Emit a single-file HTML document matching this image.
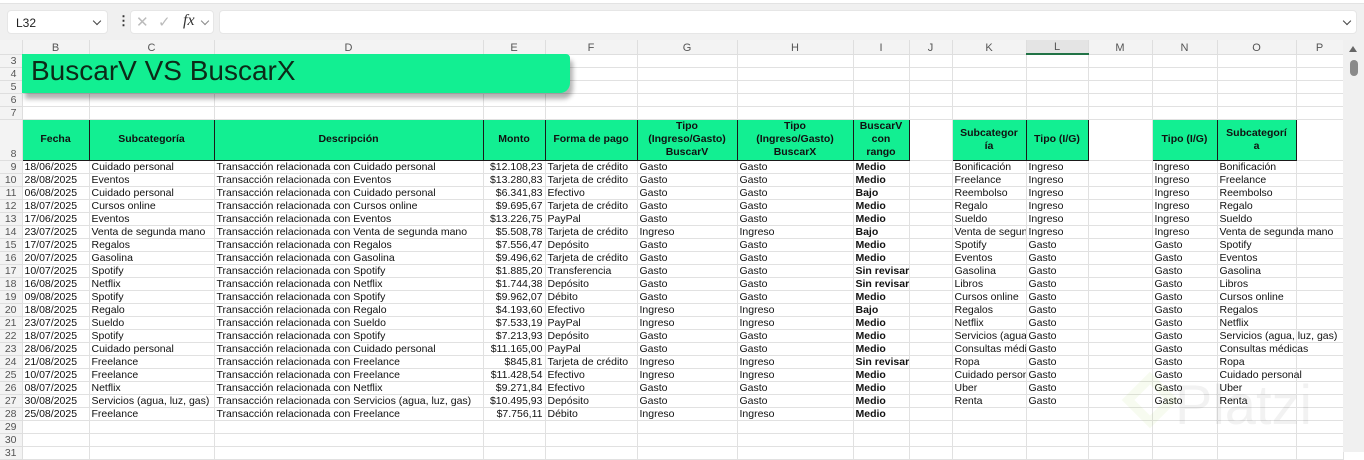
<!DOCTYPE html>
<html><head><meta charset="utf-8"><style>
*{box-sizing:border-box;margin:0;padding:0}
body{width:1364px;height:452px;overflow:hidden;background:#fff;font-family:"Liberation Sans",sans-serif;position:relative}
#tb{position:absolute;left:0;top:0;width:1364px;height:40px;background:#f0f0f0}
#tb .top{position:absolute;left:0;top:0;width:1364px;height:4px;background:#fff;border-bottom:1px solid #e3e3e3}
.box{position:absolute;background:#fff;border-radius:4px;border:1px solid #e6e6e6}
.chev{position:absolute;width:6px;height:6px;border-right:1.3px solid #444;border-bottom:1.3px solid #444;transform:rotate(45deg)}
table{position:absolute;left:0;top:40px;border-collapse:collapse;table-layout:fixed;width:1343px}
td{height:13px;font-size:10.5px;line-height:12px;padding:0 2px;white-space:nowrap;border-right:1px solid #e1e1e1;border-bottom:1px solid #e1e1e1;color:#111;vertical-align:bottom}
tr.ch td{height:14px;background:#f3f3f3;color:#555;text-align:center;font-size:11px;border-color:#dedede}
td.rh{background:#f3f3f3;color:#555;text-align:right;padding-right:5px;font-size:10.5px;border-color:#dedede}
tr.h8 td{height:41px}
tr.h8 td.g{background:#12ef92;border:1px solid #1a1a1a;font-weight:bold;text-align:center;vertical-align:middle;white-space:nowrap;line-height:13px;font-size:10.5px}
td.r{text-align:right}
td.b{font-weight:bold}
td.k{overflow:hidden;text-overflow:clip}
#title{position:absolute;left:22px;top:54px;width:548px;height:39px;background:#12ef92;border-radius:0 4px 10px 0;box-shadow:3px 6px 5px rgba(0,0,0,.3);font-size:28px;color:#0c2a18;padding-left:9px;line-height:34px}
#sb{position:absolute;left:1343px;top:40px;width:21px;height:412px;background:#f0f0f0}
</style></head><body>
<div id="tb"><div class="top"></div>
<div class="box" style="left:7px;top:10px;width:101px;height:24px"><span style="position:absolute;left:8px;top:5px;font-size:12px;color:#222">L32</span><div class="chev" style="left:86px;top:7px"></div></div>
<div style="position:absolute;left:117px;top:13px;font-size:13px;color:#333;font-weight:bold">⋮</div>
<div class="box" style="left:130px;top:10px;width:84px;height:24px;font-size:15px;color:#bbb"><span style="position:absolute;left:5px;top:2px">✕</span><span style="position:absolute;left:27px;top:2px">✓</span><span style="position:absolute;left:52px;top:1px;color:#333;font-family:'Liberation Serif',serif;font-style:italic;font-size:16px">fx</span><div class="chev" style="left:71px;top:7px;border-color:#888"></div></div>
<div class="box" style="left:219px;top:10px;width:1138px;height:24px"><div class="chev" style="left:1124px;top:7px"></div></div>
</div>
<table>
<colgroup><col style="width:22px"><col style="width:67px"><col style="width:125px"><col style="width:269px"><col style="width:62px"><col style="width:92px"><col style="width:100px"><col style="width:116px"><col style="width:56px"><col style="width:43px"><col style="width:74px"><col style="width:62px"><col style="width:64px"><col style="width:65px"><col style="width:79px"><col style="width:47px"></colgroup>
<tr class="ch"><td></td><td>B</td><td>C</td><td>D</td><td>E</td><td>F</td><td>G</td><td>H</td><td>I</td><td>J</td><td>K</td><td style="background:#e4e4e4;border-bottom:2px solid #217346">L</td><td>M</td><td>N</td><td>O</td><td>P</td></tr>
<tr><td class="rh">3</td><td></td><td></td><td></td><td></td><td></td><td></td><td></td><td></td><td></td><td></td><td></td><td></td><td></td><td></td><td></td></tr>
<tr><td class="rh">4</td><td></td><td></td><td></td><td></td><td></td><td></td><td></td><td></td><td></td><td></td><td></td><td></td><td></td><td></td><td></td></tr>
<tr><td class="rh">5</td><td></td><td></td><td></td><td></td><td></td><td></td><td></td><td></td><td></td><td></td><td></td><td></td><td></td><td></td><td></td></tr>
<tr><td class="rh">6</td><td></td><td></td><td></td><td></td><td></td><td></td><td></td><td></td><td></td><td></td><td></td><td></td><td></td><td></td><td></td></tr>
<tr><td class="rh">7</td><td></td><td></td><td></td><td></td><td></td><td></td><td></td><td></td><td></td><td></td><td></td><td></td><td></td><td></td><td></td></tr>
<tr class="h8"><td class="rh">8</td><td class="g">Fecha</td><td class="g">Subcategoría</td><td class="g">Descripción</td><td class="g">Monto</td><td class="g">Forma de pago</td><td class="g">Tipo<br>(Ingreso/Gasto)<br>BuscarV</td><td class="g">Tipo<br>(Ingreso/Gasto)<br>BuscarX</td><td class="g">BuscarV<br>con<br>rango</td><td></td><td class="g">Subcategor<br>ía</td><td class="g">Tipo (I/G)</td><td></td><td class="g">Tipo (I/G)</td><td class="g">Subcategorí<br>a</td><td></td></tr>
<tr><td class="rh">9</td><td>18/06/2025</td><td>Cuidado personal</td><td>Transacción relacionada con Cuidado personal</td><td class="r">$12.108,23</td><td>Tarjeta de crédito</td><td>Gasto</td><td>Gasto</td><td class="b">Medio</td><td></td><td class="k">Bonificación</td><td>Ingreso</td><td></td><td>Ingreso</td><td>Bonificación</td><td></td></tr>
<tr><td class="rh">10</td><td>28/08/2025</td><td>Eventos</td><td>Transacción relacionada con Eventos</td><td class="r">$13.280,83</td><td>Tarjeta de crédito</td><td>Gasto</td><td>Gasto</td><td class="b">Medio</td><td></td><td class="k">Freelance</td><td>Ingreso</td><td></td><td>Ingreso</td><td>Freelance</td><td></td></tr>
<tr><td class="rh">11</td><td>06/08/2025</td><td>Cuidado personal</td><td>Transacción relacionada con Cuidado personal</td><td class="r">$6.341,83</td><td>Efectivo</td><td>Gasto</td><td>Gasto</td><td class="b">Bajo</td><td></td><td class="k">Reembolso</td><td>Ingreso</td><td></td><td>Ingreso</td><td>Reembolso</td><td></td></tr>
<tr><td class="rh">12</td><td>18/07/2025</td><td>Cursos online</td><td>Transacción relacionada con Cursos online</td><td class="r">$9.695,67</td><td>Tarjeta de crédito</td><td>Gasto</td><td>Gasto</td><td class="b">Medio</td><td></td><td class="k">Regalo</td><td>Ingreso</td><td></td><td>Ingreso</td><td>Regalo</td><td></td></tr>
<tr><td class="rh">13</td><td>17/06/2025</td><td>Eventos</td><td>Transacción relacionada con Eventos</td><td class="r">$13.226,75</td><td>PayPal</td><td>Gasto</td><td>Gasto</td><td class="b">Medio</td><td></td><td class="k">Sueldo</td><td>Ingreso</td><td></td><td>Ingreso</td><td>Sueldo</td><td></td></tr>
<tr><td class="rh">14</td><td>23/07/2025</td><td>Venta de segunda mano</td><td>Transacción relacionada con Venta de segunda mano</td><td class="r">$5.508,78</td><td>Tarjeta de crédito</td><td>Ingreso</td><td>Ingreso</td><td class="b">Bajo</td><td></td><td class="k">Venta de segunda mano</td><td>Ingreso</td><td></td><td>Ingreso</td><td>Venta de segunda mano</td><td></td></tr>
<tr><td class="rh">15</td><td>17/07/2025</td><td>Regalos</td><td>Transacción relacionada con Regalos</td><td class="r">$7.556,47</td><td>Depósito</td><td>Gasto</td><td>Gasto</td><td class="b">Medio</td><td></td><td class="k">Spotify</td><td>Gasto</td><td></td><td>Gasto</td><td>Spotify</td><td></td></tr>
<tr><td class="rh">16</td><td>20/07/2025</td><td>Gasolina</td><td>Transacción relacionada con Gasolina</td><td class="r">$9.496,62</td><td>Tarjeta de crédito</td><td>Gasto</td><td>Gasto</td><td class="b">Medio</td><td></td><td class="k">Eventos</td><td>Gasto</td><td></td><td>Gasto</td><td>Eventos</td><td></td></tr>
<tr><td class="rh">17</td><td>10/07/2025</td><td>Spotify</td><td>Transacción relacionada con Spotify</td><td class="r">$1.885,20</td><td>Transferencia</td><td>Gasto</td><td>Gasto</td><td class="b">Sin revisar</td><td></td><td class="k">Gasolina</td><td>Gasto</td><td></td><td>Gasto</td><td>Gasolina</td><td></td></tr>
<tr><td class="rh">18</td><td>16/08/2025</td><td>Netflix</td><td>Transacción relacionada con Netflix</td><td class="r">$1.744,38</td><td>Depósito</td><td>Gasto</td><td>Gasto</td><td class="b">Sin revisar</td><td></td><td class="k">Libros</td><td>Gasto</td><td></td><td>Gasto</td><td>Libros</td><td></td></tr>
<tr><td class="rh">19</td><td>09/08/2025</td><td>Spotify</td><td>Transacción relacionada con Spotify</td><td class="r">$9.962,07</td><td>Débito</td><td>Gasto</td><td>Gasto</td><td class="b">Medio</td><td></td><td class="k">Cursos online</td><td>Gasto</td><td></td><td>Gasto</td><td>Cursos online</td><td></td></tr>
<tr><td class="rh">20</td><td>18/08/2025</td><td>Regalo</td><td>Transacción relacionada con Regalo</td><td class="r">$4.193,60</td><td>Efectivo</td><td>Ingreso</td><td>Ingreso</td><td class="b">Bajo</td><td></td><td class="k">Regalos</td><td>Gasto</td><td></td><td>Gasto</td><td>Regalos</td><td></td></tr>
<tr><td class="rh">21</td><td>23/07/2025</td><td>Sueldo</td><td>Transacción relacionada con Sueldo</td><td class="r">$7.533,19</td><td>PayPal</td><td>Ingreso</td><td>Ingreso</td><td class="b">Medio</td><td></td><td class="k">Netflix</td><td>Gasto</td><td></td><td>Gasto</td><td>Netflix</td><td></td></tr>
<tr><td class="rh">22</td><td>18/07/2025</td><td>Spotify</td><td>Transacción relacionada con Spotify</td><td class="r">$7.213,93</td><td>Depósito</td><td>Gasto</td><td>Gasto</td><td class="b">Medio</td><td></td><td class="k">Servicios (agua, luz, gas)</td><td>Gasto</td><td></td><td>Gasto</td><td>Servicios (agua, luz, gas)</td><td></td></tr>
<tr><td class="rh">23</td><td>28/06/2025</td><td>Cuidado personal</td><td>Transacción relacionada con Cuidado personal</td><td class="r">$11.165,00</td><td>PayPal</td><td>Gasto</td><td>Gasto</td><td class="b">Medio</td><td></td><td class="k">Consultas médicas</td><td>Gasto</td><td></td><td>Gasto</td><td>Consultas médicas</td><td></td></tr>
<tr><td class="rh">24</td><td>21/08/2025</td><td>Freelance</td><td>Transacción relacionada con Freelance</td><td class="r">$845,81</td><td>Tarjeta de crédito</td><td>Ingreso</td><td>Ingreso</td><td class="b">Sin revisar</td><td></td><td class="k">Ropa</td><td>Gasto</td><td></td><td>Gasto</td><td>Ropa</td><td></td></tr>
<tr><td class="rh">25</td><td>10/07/2025</td><td>Freelance</td><td>Transacción relacionada con Freelance</td><td class="r">$11.428,54</td><td>Efectivo</td><td>Ingreso</td><td>Ingreso</td><td class="b">Medio</td><td></td><td class="k">Cuidado personal</td><td>Gasto</td><td></td><td>Gasto</td><td>Cuidado personal</td><td></td></tr>
<tr><td class="rh">26</td><td>08/07/2025</td><td>Netflix</td><td>Transacción relacionada con Netflix</td><td class="r">$9.271,84</td><td>Efectivo</td><td>Gasto</td><td>Gasto</td><td class="b">Medio</td><td></td><td class="k">Uber</td><td>Gasto</td><td></td><td>Gasto</td><td>Uber</td><td></td></tr>
<tr><td class="rh">27</td><td>30/08/2025</td><td>Servicios (agua, luz, gas)</td><td>Transacción relacionada con Servicios (agua, luz, gas)</td><td class="r">$10.495,93</td><td>Depósito</td><td>Gasto</td><td>Gasto</td><td class="b">Medio</td><td></td><td class="k">Renta</td><td>Gasto</td><td></td><td>Gasto</td><td>Renta</td><td></td></tr>
<tr><td class="rh">28</td><td>25/08/2025</td><td>Freelance</td><td>Transacción relacionada con Freelance</td><td class="r">$7.756,11</td><td>Débito</td><td>Ingreso</td><td>Ingreso</td><td class="b">Medio</td><td></td><td></td><td></td><td></td><td></td><td></td><td></td></tr>
<tr><td class="rh">29</td><td></td><td></td><td></td><td></td><td></td><td></td><td></td><td></td><td></td><td></td><td></td><td></td><td></td><td></td><td></td></tr>
<tr><td class="rh">30</td><td></td><td></td><td></td><td></td><td></td><td></td><td></td><td></td><td></td><td></td><td></td><td></td><td></td><td></td><td></td></tr>
<tr><td class="rh">31</td><td></td><td></td><td></td><td></td><td></td><td></td><td></td><td></td><td></td><td></td><td></td><td></td><td></td><td></td><td></td></tr>
</table>
<div id="title">BuscarV VS BuscarX</div>
<div style="position:absolute;left:1130px;top:380px;width:40px;height:40px;border:9px solid rgba(150,200,60,.08);transform:rotate(45deg)"></div>
<div style="position:absolute;left:1175px;top:372px;font-size:56px;color:rgba(0,0,0,.05)">Platzi</div>
<div id="sb"><div style="position:absolute;left:6px;top:6px;width:0;height:0;border-left:4px solid transparent;border-right:4px solid transparent;border-bottom:6px solid #666"></div><div style="position:absolute;left:7px;top:20px;width:8px;height:16px;border-radius:4px;background:#8a8a8a"></div></div>
</body></html>
